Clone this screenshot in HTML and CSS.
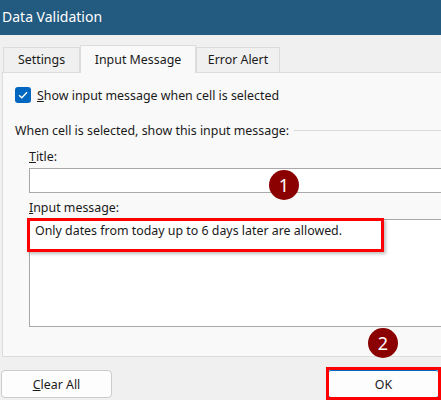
FILE: index.html
```html
<!DOCTYPE html>
<html>
<head>
    <meta charset="utf-8">
    <title>Data Validation</title>
    <link rel="stylesheet" href="styles.css">
</head>
<body>
    <div class="titlebar">Data Validation</div>
    <div class="tabs">
        <div class="tab tab-settings">Settings</div>
        <div class="tab tab-input active">Input Message</div>
        <div class="tab tab-error">Error Alert</div>
    </div>
    <div class="panel">
        <label class="check-row">
            <span class="checkbox">
                <svg width="10" height="8" viewBox="0 0 10 8"><path d="M1 4.2 L3.8 6.8 L9 1.2" fill="none" stroke="#fff" stroke-width="1.3"/></svg>
            </span>
            <span><u>S</u>how input message when cell is selected</span>
        </label>
        <div class="group-head"><span>When cell is selected, show this input message:</span><span class="rule"></span></div>
        <div class="fields">
            <div class="lbl"><u>T</u>itle:</div>
            <div class="field title-field"></div>
            <div class="lbl"><u>I</u>nput message:</div>
            <div class="field msg-field">Only dates from today up to 6 days later are allowed.</div>
        </div>
    </div>
    <div class="buttons">
        <button class="btn"><u>C</u>lear All</button>
        <button class="btn ok">OK</button>
    </div>

    <div class="mark mark-msg"></div>
    <div class="mark mark-ok"></div>
    <div class="badge badge-1">1</div>
    <div class="badge badge-2">2</div>
</body>
</html>
```

FILE: styles.css
```css
body {
    margin: 0;
    width: 441px;
    height: 400px;
    overflow: hidden;
    position: relative;
    background-color: #f0f0f0;
    font-family: "Noto Sans", "Open Sans", sans-serif;
    font-size: 12.4px;
    color: #1a1a1a;
}

.titlebar {
    height: 35px;
    line-height: 34px;
    padding-left: 2px;
    background-color: #235a80;
    color: #fff;
    font-size: 14px;
}

.tabs {
    display: flex;
    align-items: flex-end;
    height: 37px;
    padding-left: 3px;
    position: relative;
    z-index: 1;
}
.tab {
    box-sizing: border-box;
    height: 25px;
    line-height: 24px;
    text-align: center;
    white-space: nowrap;
    border: 1px solid #dcdcdc;
    border-bottom: none;
    background-color: #f0f0f0;
}
.tab-settings {
    width: 77px;
}
.tab-input {
    width: 116px;
}
.tab-error {
    width: 84px;
}
.tab.active {
    height: 28px;
    line-height: 28px;
    background-color: #f9f9f9;
    margin-bottom: -1px;
}

.panel {
    width: 442px;
    margin-left: 2px;
    border: 1px solid #dcdcdc;
    background-color: #f9f9f9;
    height: 285px;
    box-sizing: border-box;
    padding: 14px 0 0 12px;
}

.check-row {
    display: flex;
    align-items: center;
    gap: 6px;
    height: 16px;
}
.checkbox {
    width: 16px;
    height: 16px;
    border-radius: 3px;
    background-color: #0067c0;
    display: flex;
    align-items: center;
    justify-content: center;
}

.group-head {
    display: flex;
    align-items: center;
    gap: 5px;
    margin-top: 19px;
    height: 16px;
}
.rule {
    flex: 1;
    border-top: 1px solid #d9d9d9;
}

.fields {
    padding-left: 14px;
}
.lbl {
    height: 16px;
    line-height: 16px;
    margin-top: 11px;
}
.lbl + .field {
    margin-top: 3px;
}
.field {
    background-color: #fff;
    border: 1px solid #a9a9a9;
    box-sizing: border-box;
}
.title-field {
    height: 25px;
}
.fields .lbl:nth-child(3) {
    margin-top: 7px;
}
.msg-field {
    height: 108px;
    padding: 3px 5px;
    line-height: 16px;
}

.buttons {
    display: flex;
    justify-content: space-between;
    margin-top: 13px;
    padding: 0 1px;
}
.btn {
    font: inherit;
    color: #1a1a1a;
    height: 28px;
    background-color: #fdfdfd;
    border: 1px solid #cccccc;
    border-radius: 4px;
    width: 111px;
}
.btn.ok {
    width: 113px;
    border-color: #0067c0;
}

.mark {
    position: absolute;
    border: 3px solid #ff0000;
    box-shadow: 2px 2px 3px rgba(0, 0, 0, 0.25);
}
.mark-msg {
    left: 27px;
    top: 218px;
    width: 351px;
    height: 28px;
}
.mark-ok {
    left: 326px;
    top: 367px;
    width: 109px;
    height: 27px;
}

.badge {
    position: absolute;
    width: 30px;
    height: 30px;
    border-radius: 50%;
    background-color: #8b0000;
    color: #fff;
    font-size: 18px;
    line-height: 30px;
    text-align: center;
}
.badge-1 {
    left: 269px;
    top: 170px;
}
.badge-2 {
    left: 368px;
    top: 328px;
}
```
